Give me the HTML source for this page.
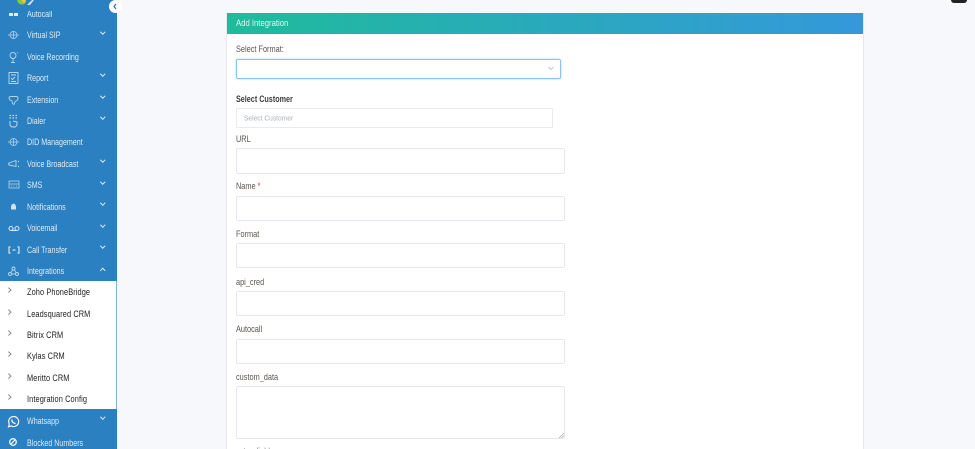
<!DOCTYPE html>
<html><head><meta charset="utf-8"><style>
*{box-sizing:border-box}
html,body{margin:0;padding:0;width:975px;height:449px;overflow:hidden;background:#f6f8fb;font-family:"Liberation Sans",sans-serif}
#wrap{position:relative;width:975px;height:449px;overflow:hidden;background:#f6f8fb}
.abs,.t,.sub,.lb,.in,.ch,.ic,.sc{position:absolute}
#side{position:absolute;left:0;top:0;width:117px;height:449px;background:#2a80c0}
#subbg{position:absolute;left:0;top:281px;width:117px;height:128px;background:#fff;border-right:1px solid #7db8e4}
.t{left:27px;font-size:9px;line-height:12px;color:#dcecf8;white-space:nowrap;transform:scaleX(.79);transform-origin:left center}
.sub{left:27px;font-size:9px;line-height:12px;color:#222;white-space:nowrap;letter-spacing:.12px;transform:scaleX(.82);transform-origin:left center}
.sc{width:3.500px;height:3.500px;border-top:1px solid #888;border-right:1px solid #888;transform:rotate(45deg)}
.ch{left:101px;width:3.500px;height:3.500px;border-right:1px solid #dcecf8;border-bottom:1px solid #dcecf8;transform:rotate(45deg)}
.ic{left:7px;width:12px;height:12px;overflow:visible;opacity:.85}
#card{position:absolute;left:226px;top:13px;width:638px;height:436px;background:#fff;border:1px solid #e8e8e8;border-top:0;border-bottom:0}
#head{position:absolute;left:227px;top:13px;width:636px;height:21px;background:linear-gradient(90deg,#1fbb9b,#3498db);color:#e4f5f2;font-size:9.200px;line-height:21px}
#head span{position:absolute;left:9px;top:0;transform:scaleX(.84);transform-origin:left center;white-space:nowrap}
.lb{left:236px;font-size:9.200px;line-height:12px;color:#5b5450;white-space:nowrap;transform:scaleX(.8);transform-origin:left center}
.in{left:236px;width:329px;background:#fff;border:1px solid #e6e7ee;border-radius:2px}
</style></head><body><div id="wrap">
<div id="side"></div>
<div id="subbg"></div>

<div class="t" style="top:8px">Autocall</div>
<div class="abs" style="left:0;top:0;width:117px;height:11px;background:#2a80c0"></div>
<svg class="abs" style="left:14px;top:0;width:24px;height:6px" viewBox="0 0 24 6"><path d="M3 0q1 5 6 4.500q3-1 3-4.500z" fill="#8dc63f"/><path d="M8 0q0 3 3 3l1-3z" fill="#f3c23c"/><path d="M13 5l5-5h2l-4 5z" fill="#cfe0ea"/></svg>
<div class="abs" style="left:109px;top:0;width:13px;height:13px;background:#fff;border-radius:50%"></div>
<svg class="abs" style="left:112px;top:3px;width:6px;height:7px" viewBox="0 0 6 7"><path d="M4 1L2 3.500L4 6" fill="none" stroke="#3a60c8" stroke-width="1.200"/></svg>

<div class="abs" style="left:9px;top:13px;width:4px;height:3px;background:#dcecf8"></div>
<div class="abs" style="left:14px;top:13px;width:4px;height:3px;background:#dcecf8"></div>

<div class="t" style="top:29px">Virtual SIP</div>
<div class="t" style="top:51px">Voice Recording</div>
<div class="t" style="top:72px">Report</div>
<div class="t" style="top:94px">Extension</div>
<div class="t" style="top:115px">Dialer</div>
<div class="t" style="top:136px">DID Management</div>
<div class="t" style="top:158px">Voice Broadcast</div>
<div class="t" style="top:179px">SMS</div>
<div class="t" style="top:201px">Notifications</div>
<div class="t" style="top:222px">Voicemail</div>
<div class="t" style="top:244px">Call Transfer</div>
<div class="t" style="top:265px">Integrations</div>
<div class="t" style="top:415px">Whatsapp</div>
<div class="t" style="top:437px">Blocked Numbers</div>

<div class="ch" style="top:30px"></div>
<div class="ch" style="top:72px"></div>
<div class="ch" style="top:94px"></div>
<div class="ch" style="top:115px"></div>
<div class="ch" style="top:158px"></div>
<div class="ch" style="top:180px"></div>
<div class="ch" style="top:201px"></div>
<div class="ch" style="top:223px"></div>
<div class="ch" style="top:244px"></div>
<div class="ch" style="top:269px;transform:rotate(225deg)"></div>
<div class="ch" style="top:415px"></div>

<svg class="ic" style="top:29px" viewBox="0 0 12 12" fill="none" stroke="#cfe4f4" stroke-width=".8"><circle cx="6.500" cy="6" r="3.500"/><path d="M1 6h11M6.500 2.500v7"/></svg>
<svg class="ic" style="top:51px" viewBox="0 0 12 12" fill="none" stroke="#cfe4f4" stroke-width=".9"><circle cx="6" cy="4.500" r="3"/><path d="M6 7.500v4M4 11.500h4M10 2l1-.5"/></svg>
<svg class="ic" style="top:72px" viewBox="0 0 12 12" fill="none" stroke="#dcecf8" stroke-width=".9"><rect x="2" y="0.500" width="9" height="11"/><path d="M4 3h5M4 6l1.500 1.500L8 5M4 9.500h5"/></svg>
<svg class="ic" style="top:94px" viewBox="0 0 12 12" fill="none" stroke="#cfe4f4" stroke-width=".9"><path d="M2 4q0-1.500 2-1.500h5q2 0 2 2t-2 2.500l-1 1-1 2.500-1.500-1-.5-2.500-2-1z"/></svg>
<svg class="ic" style="top:115px" viewBox="0 0 12 12" fill="none" stroke="#dcecf8" stroke-width="1"><path d="M2.500 .5h1.500M5.500 .5h1.500M8.500 .5h1.500M2.500 3h1.500M5.500 3h1.500M8.500 3h1.500" stroke-width="1.300"/><path d="M3 6v4q1 2 3 2h2q2-1 2-3V7L6 6"/></svg>
<svg class="ic" style="top:136px" viewBox="0 0 12 12" fill="none" stroke="#cfe4f4" stroke-width=".8"><circle cx="6.500" cy="6" r="3.500"/><path d="M1 6h11M6.500 2.500v7"/></svg>
<svg class="ic" style="top:158px" viewBox="0 0 12 12" fill="none" stroke="#cfe4f4" stroke-width=".9"><path d="M2 5l7-2.500v6L2 7zM1 6h1M11 4l1-1M11 8l1 1"/></svg>
<svg class="ic" style="top:179px" viewBox="0 0 12 12" fill="none" stroke="#cfe4f4" stroke-width=".8"><rect x="2" y="2" width="10" height="7"/><path d="M2 5h10M4 7h1M6.500 7h1M9 7h1"/></svg>
<svg class="ic" style="top:201px" viewBox="0 0 12 12"><path d="M6.500 2.500q2.500.5 2.500 4v2H4v-2q0-3.500 2.500-4z" fill="#eef6fc"/></svg>
<svg class="ic" style="top:222px" viewBox="0 0 12 12" fill="none" stroke="#eef6fc" stroke-width="1.100"><circle cx="4" cy="6.500" r="2"/><circle cx="10" cy="6.500" r="2"/><path d="M4 8.500h6"/></svg>
<svg class="ic" style="top:244px" viewBox="0 0 12 12" fill="none" stroke="#eef6fc" stroke-width="1.200"><path d="M3.500 3H2v6h1.500M10.500 3H12v6h-1.500M5.500 6h3"/></svg>
<svg class="ic" style="top:265px" viewBox="0 0 12 12" fill="none" stroke="#cfe4f4" stroke-width=".9"><circle cx="6.500" cy="3.500" r="1.500"/><circle cx="3" cy="9" r="1.500"/><circle cx="10" cy="9" r="1.500"/><path d="M5.500 5L4 7.500M7.500 5L9 7.500M4.500 9h4"/></svg>
<svg class="ic" style="top:415px;left:7px;width:13px;height:13px;opacity:1" viewBox="0 0 13 13" fill="none" stroke="#eef6fc" stroke-width="1.200"><path d="M1.500 11.800l.8-2.800a5 5 0 1 1 1.900 1.900z"/><path d="M4.800 4.500q0 3.500 3.800 4" stroke-width="1.400"/></svg>
<svg class="ic" style="top:436px;opacity:1" viewBox="0 0 12 12" fill="none" stroke="#eef6fc" stroke-width="1.300"><circle cx="6" cy="6" r="3.300"/><path d="M3.800 8.200l4.400-4.400"/></svg>

<div class="sub" style="top:286px">Zoho PhoneBridge</div>
<div class="sub" style="top:308px">Leadsquared CRM</div>
<div class="sub" style="top:329px">Bitrix CRM</div>
<div class="sub" style="top:350px">Kylas CRM</div>
<div class="sub" style="top:372px">Meritto CRM</div>
<div class="sub" style="top:393px">Integration Config</div>
<div class="sc" style="top:288px;left:7px"></div>
<div class="sc" style="top:310px;left:7px"></div>
<div class="sc" style="top:331px;left:7px"></div>
<div class="sc" style="top:352px;left:7px"></div>
<div class="sc" style="top:374px;left:7px"></div>
<div class="sc" style="top:395px;left:7px"></div>

<div id="card"></div>
<div id="head"><span>Add Integration</span></div>

<div class="lb" style="top:43px">Select Format:</div>
<div class="abs" style="left:236px;top:59px;width:325px;height:20px;background:#fff;border:1px solid #8fc2f3;border-radius:2px;box-shadow:0 0 2px #a9d0f7"></div>
<svg class="abs" style="left:548px;top:66px;width:6px;height:5px" viewBox="0 0 6 5"><path d="M.5 1L3 3.500L5.500 1" fill="none" stroke="#aaa" stroke-width=".7"/></svg>

<div class="lb" style="top:93px;font-weight:bold;color:#3c3c3c;font-size:9px">Select Customer</div>
<div class="abs" style="left:236px;top:108px;width:317px;height:20px;background:#fff;border:1px solid #ebebeb"></div>
<div class="abs" style="left:244px;top:112px;font-size:7px;line-height:12px;color:#a9b2b8;white-space:nowrap;transform:translateY(1.500px) scaleX(.95);transform-origin:left center">Select Customer</div>

<div class="lb" style="top:133px">URL</div>
<div class="in" style="top:148px;height:26px"></div>
<div class="lb" style="top:180px">Name <span style="color:#e33">*</span></div>
<div class="in" style="top:196px;height:25px"></div>
<div class="lb" style="top:228px">Format</div>
<div class="in" style="top:243px;height:25px"></div>
<div class="lb" style="top:276px">api_cred</div>
<div class="in" style="top:291px;height:25px"></div>
<div class="lb" style="top:323px">Autocall</div>
<div class="in" style="top:339px;height:25px"></div>
<div class="lb" style="top:371px">custom_data</div>
<div class="in" style="top:386px;height:53px"></div>
<svg class="abs" style="left:559px;top:433px;width:5px;height:5px" viewBox="0 0 5 5"><path d="M0 5L5 0M2.500 5L5 2.500" stroke="#999" stroke-width=".6"/></svg>
<div class="lb" style="top:445px;height:4px;overflow:hidden;color:#888">extra_fields</div>

<div class="abs" style="left:951px;top:0;width:16px;height:3px;background:#222;border-radius:0 0 8px 8px"></div>
</div></body></html>
